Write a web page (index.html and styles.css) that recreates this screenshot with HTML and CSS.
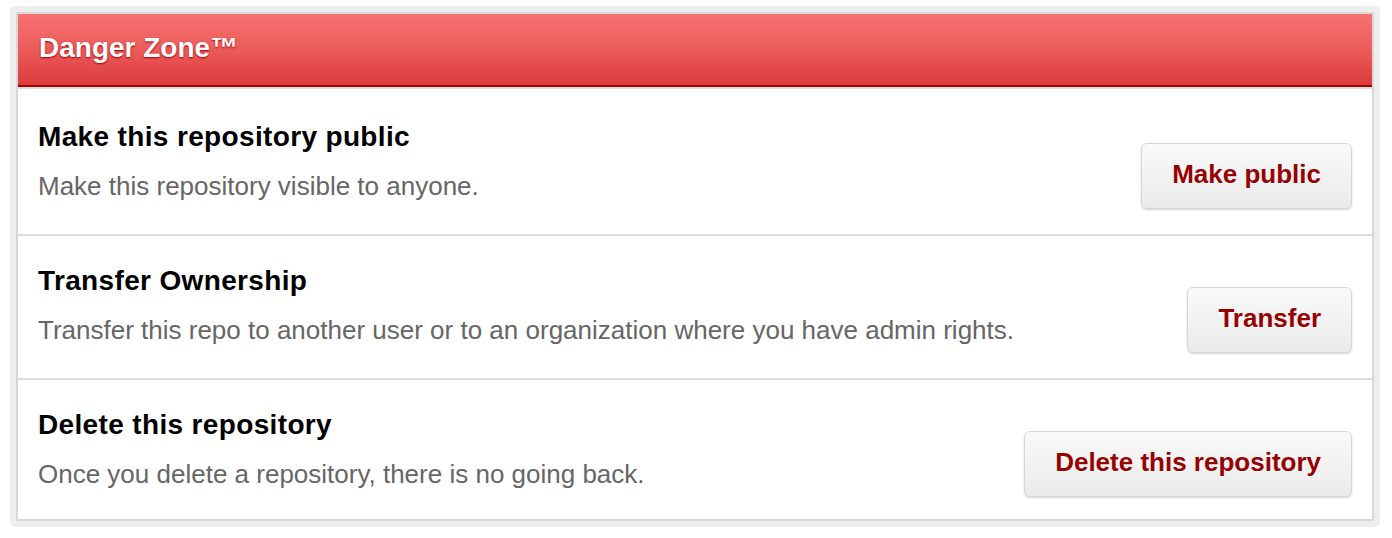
FILE: index.html
```html
<!DOCTYPE html>
<html lang="en">
<head>
<meta charset="utf-8">
<title>Danger Zone</title>
<link rel="stylesheet" href="styles.css">
</head>
<body>
<div class="frame">
  <div class="box">
    <div class="box-header">Danger Zone™</div>
    <div class="row">
      <div class="row-text">
        <h4 class="row-title">Make this repository public</h4>
        <p class="row-desc">Make this repository visible to anyone.</p>
      </div>
      <button class="btn">Make public</button>
    </div>
    <div class="row">
      <div class="row-text">
        <h4 class="row-title">Transfer Ownership</h4>
        <p class="row-desc">Transfer this repo to another user or to an organization where you have admin rights.</p>
      </div>
      <button class="btn">Transfer</button>
    </div>
    <div class="row">
      <div class="row-text">
        <h4 class="row-title">Delete this repository</h4>
        <p class="row-desc">Once you delete a repository, there is no going back.</p>
      </div>
      <button class="btn">Delete this repository</button>
    </div>
  </div>
</div>
</body>
</html>
```

FILE: styles.css
```css
html, body {
  margin: 0;
  padding: 0;
  background: #ffffff;
}

body {
  font-family: "Liberation Sans", Arial, Helvetica, sans-serif;
}

.frame {
  margin: 6px 12px 10px 10px;
  padding: 6px;
  background: #eeeeee;
  border-radius: 5px;
}

.box {
  border: 2px solid #d8d8d8;
  background: #ffffff;
}

.box-header {
  padding: 17px 20px 20px 21px;
  font-size: 28px;
  line-height: 34px;
  font-weight: bold;
  color: #ffffff;
  text-shadow: 0 1px 2px #a30000;
  background: linear-gradient(to bottom, #f87272 0%, #ec5b5b 50%, #dc3b3b 100%);
  border-bottom: 2px solid #a30000;
}

.row {
  display: flex;
  align-items: flex-start;
  justify-content: space-between;
  border-top: 2px solid #dddddd;
  padding: 28px 20px 0 20px;
}

.row-text {
  display: flex;
  flex-direction: column;
  padding-bottom: 32px;
}

.box-header + .row {
  padding-top: 31px;
}

.row:last-child {
  padding-top: 28px;
}

.row:last-child .row-text {
  padding-bottom: 29px;
}

.row-title {
  margin: 0;
  font-size: 28px;
  line-height: 34px;
  font-weight: bold;
  color: #000000;
  letter-spacing: 0.35px;
}

.row-desc {
  margin: 16px 0 0 0;
  font-size: 26px;
  line-height: 32px;
  color: #666666;
}

.btn {
  margin-top: 23px;
  padding: 15px 30px 19px 30px;
  font-family: "Liberation Sans", Arial, Helvetica, sans-serif;
  font-size: 26px;
  line-height: 30px;
  font-weight: bold;
  color: #990000;
  text-shadow: 0 1px 0 #ffffff;
  background: linear-gradient(to bottom, #fafafa 0%, #eaeaea 100%);
  border: 1px solid #d6d6d6;
  border-radius: 6px;
  box-shadow: 0 1px 2px rgba(0, 0, 0, 0.18);
  white-space: nowrap;
  flex-shrink: 0;
}

.row:last-child .btn {
  margin-top: 23px;
}
```
